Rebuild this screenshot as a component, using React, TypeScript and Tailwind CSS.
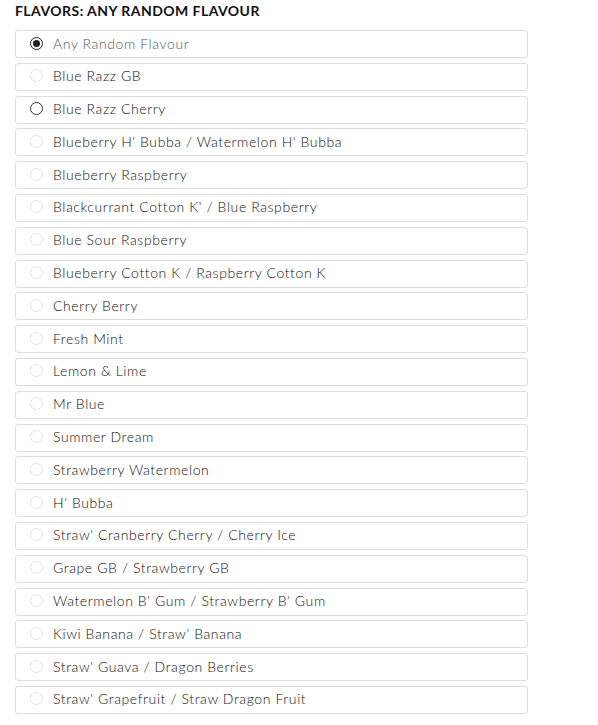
import React from "react";

const items = [
  "Any Random Flavour",
  "Blue Razz GB",
  "Blue Razz Cherry",
  "Blueberry H' Bubba / Watermelon H' Bubba",
  "Blueberry Raspberry",
  "Blackcurrant Cotton K' / Blue Raspberry",
  "Blue Sour Raspberry",
  "Blueberry Cotton K / Raspberry Cotton K",
  "Cherry Berry",
  "Fresh Mint",
  "Lemon & Lime",
  "Mr Blue",
  "Summer Dream",
  "Strawberry Watermelon",
  "H' Bubba",
  "Straw' Cranberry Cherry / Cherry Ice",
  "Grape GB / Strawberry GB",
  "Watermelon B' Gum / Strawberry B' Gum",
  "Kiwi Banana / Straw' Banana",
  "Straw' Guava / Dragon Berries",
  "Straw' Grapefruit / Straw Dragon Fruit",
];

function Radio({ state }: { state: "checked" | "hover" | "idle" }) {
  if (state === "checked") {
    return (
      <span className="flex h-[13px] w-[13px] shrink-0 items-center justify-center rounded-full border border-[#222]">
        <span className="h-[7px] w-[7px] rounded-full bg-[#222]" />
      </span>
    );
  }
  if (state === "hover") {
    return <span className="h-[13px] w-[13px] shrink-0 rounded-full border border-[#333]" />;
  }
  return <span className="h-[13px] w-[13px] shrink-0 rounded-full border border-[#e3e3e3]" />;
}

export default function App() {
  return (
    <div className="min-h-[725px] bg-white px-[15px] pt-[2px]" style={{ fontFamily: "Lato, 'Noto Sans', sans-serif" }}>
      <div className="text-[14px] font-bold leading-[17px] tracking-[0.45px] text-[#111]">FLAVORS: ANY RANDOM FLAVOUR</div>
      <div className="mt-[11px] flex w-[513px] flex-col gap-[4.8px]">
        {items.map((t, i) => (
          <label
            key={t}
            className="flex h-[28px] items-center rounded-[3px] border border-[#dedede] pb-[2px] pl-[14px]"
          >
            <Radio state={i === 0 ? "checked" : i === 2 ? "hover" : "idle"} />
            <span
              className={`ml-[10px] text-[14px] font-light tracking-[0.6px] ${i === 0 ? "text-[#555]" : "text-[#111]"}`}
            >
              {t}
            </span>
          </label>
        ))}
      </div>
    </div>
  );
}
